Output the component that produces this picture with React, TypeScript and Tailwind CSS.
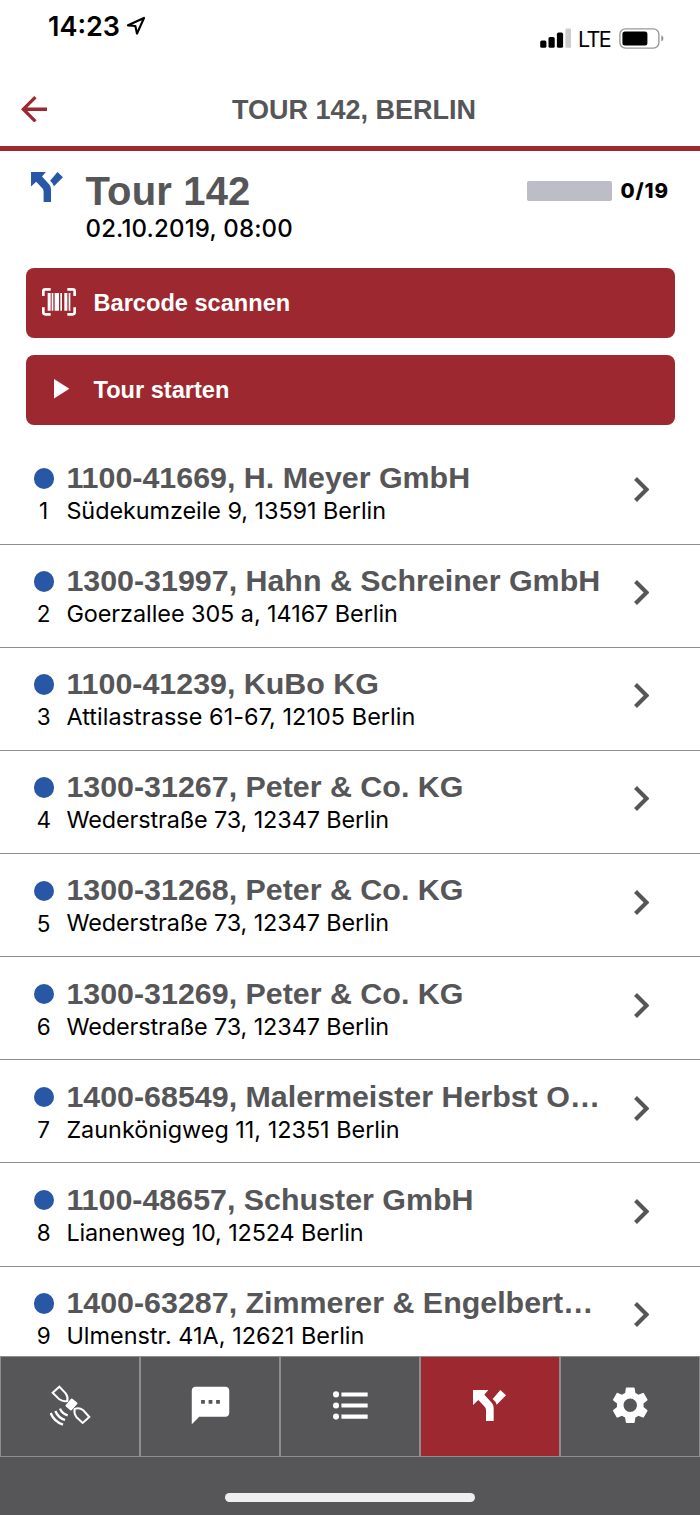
import { MdSettings, MdSms } from "react-icons/md";

type Stop = { title: string; address: string; tracking: string };

const stops: Stop[] = [
  { title: "1100-41669, H. Meyer GmbH", address: "Südekumzeile 9, 13591 Berlin", tracking: "tracking-[-0.05px]" },
  { title: "1300-31997, Hahn & Schreiner GmbH", address: "Goerzallee 305 a, 14167 Berlin", tracking: "tracking-[-0.05px]" },
  { title: "1100-41239, KuBo KG", address: "Attilastrasse 61-67, 12105 Berlin", tracking: "tracking-[0.07px]" },
  { title: "1300-31267, Peter & Co. KG", address: "Wederstraße 73, 12347 Berlin", tracking: "tracking-[-0.1px]" },
  { title: "1300-31268, Peter & Co. KG", address: "Wederstraße 73, 12347 Berlin", tracking: "tracking-[-0.1px]" },
  { title: "1300-31269, Peter & Co. KG", address: "Wederstraße 73, 12347 Berlin", tracking: "tracking-[-0.1px]" },
  { title: "1400-68549, Malermeister Herbst O…", address: "Zaunkönigweg 11, 12351 Berlin", tracking: "tracking-normal" },
  { title: "1100-48657, Schuster GmbH", address: "Lianenweg 10, 12524 Berlin", tracking: "tracking-[-0.13px]" },
  { title: "1400-63287, Zimmerer & Engelbert…", address: "Ulmenstr. 41A, 12621 Berlin", tracking: "tracking-[0.03px]" },
];

function SplitIcon({ className }: { className: string }) {
  return (
    <svg viewBox="39 152 99 93" className={className} fill="currentColor">
      <path d="M39 152H85L73 166L95 190Q101 196 101 205V245H78V212Q78 206 74 202L55 182L39 197Z" />
      <path d="M121 152L138 168L110 196Q107 186 98 179Z" />
    </svg>
  );
}

function SatelliteIcon() {
  return (
    <svg viewBox="149 140 123 123" className="h-[41px] w-[41px]" fill="none" stroke="white" strokeWidth="6">
      <path d="M157 163L177 145L196 165Q204 176 201 188Q187 191 177 183Z" />
      <path d="M223 212Q236 206 248 215L267 236L247 254L228 236Q220 225 223 212Z" />
      <path d="M214 184L228 195L212 213L199 202Z" fill="white" strokeLinejoin="round" strokeWidth="7" />
      <g strokeWidth="7">
        <path d="M151 224Q161 250 188 259" />
        <path d="M165 218Q173 238 194 245" />
        <path d="M179 211Q185 226 202 231" />
      </g>
    </svg>
  );
}

function ListIcon() {
  return (
    <svg viewBox="247 153 104 86" className="h-[29px] w-[35px]" fill="white">
      <circle cx="256" cy="163" r="9" />
      <circle cx="256" cy="196" r="9" />
      <circle cx="256" cy="229" r="9" />
      <path d="M272 157H350V169H272ZM272 190H350V202H272ZM272 223H350V235H272Z" />
    </svg>
  );
}

function BarcodeIcon() {
  return (
    <svg viewBox="127 114 102 84" className="h-7 w-[34px]" fill="none">
      <path
        d="M131 138V124Q131 118 137 118H153M203 118H219Q225 118 225 124V138M225 172V187Q225 193 219 193H203M153 193H137Q131 193 131 187V172"
        stroke="white"
        strokeWidth="8"
      />
      <path
        d="M144 129H153V182H144ZM156 129H161V182H156ZM165 129H178V182H165ZM182 129H187V182H182ZM194 129H203V182H194ZM207 129H212V182H207Z"
        fill="white"
      />
    </svg>
  );
}

function StatusBar() {
  return (
    <div className="flex h-[72px] items-start justify-between pl-12 pr-9">
      <div className="flex items-center pt-[11px]">
        <span className="text-[27px] font-semibold leading-8">14:23</span>
        <svg viewBox="378 48 60 58" className="mb-[2px] ml-[6px] h-[19.3px] w-5 shrink-0" fill="none" stroke="black" strokeWidth="6.5" strokeLinejoin="round">
          <path d="M384 76L432 54L411 101L406 78Z" />
        </svg>
      </div>
      <div className="flex items-center pt-[21px]">
        <svg viewBox="0 0 31.5 20" className="h-5 w-[31.5px]">
          <rect x="0.2" y="12.5" width="6.2" height="7.3" rx="1.6" />
          <rect x="8.5" y="9" width="6.2" height="10.8" rx="1.6" />
          <rect x="16.9" y="4.6" width="6.2" height="15.2" rx="1.6" />
          <rect x="25.4" y="0.6" width="6" height="19.2" rx="1.4" fill="#cccccc" />
        </svg>
        <span className="ml-[7px] mt-[2px] w-[41px] text-[21.5px] leading-8 tracking-[-1.6px]">LTE</span>
        <svg viewBox="0 0 45 21" className="h-[21px] w-[45px]">
          <rect x="0.9" y="0.9" width="39" height="19.2" rx="5.5" fill="none" stroke="#999999" strokeWidth="1.4" />
          <rect x="3.4" y="3.4" width="25" height="14.2" rx="2.5" />
          <path d="M42.4 7.2Q44.4 8.3 44.4 10.5T42.4 13.5Z" fill="#8c8c8c" />
        </svg>
      </div>
    </div>
  );
}

function ActionButton({ label, icon }: { label: string; icon: React.ReactNode }) {
  return (
    <button className="flex h-[70px] w-full items-center rounded-lg bg-[#9e2830] text-left text-white">
      <span className="-mt-[2px] flex w-[68px] justify-center pr-[2px]">{icon}</span>
      <span className="pt-[2px] font-['Liberation_Sans',sans-serif] text-[23.6px] font-bold">{label}</span>
    </button>
  );
}

function StopRow({ stop, index }: { stop: Stop; index: number }) {
  return (
    <li className="flex h-[103.15px] shrink-0 border-b-[1.5px] border-[#8e8e8e]">
      <div className="flex w-[66.4px] shrink-0 flex-col items-center pl-[21px] pt-[26.5px]">
        <span className="ml-px h-[20.5px] w-[20.5px] rounded-full bg-[#2857a6]" />
        <span className="mt-[8.5px] text-[22.5px] leading-7">{index}</span>
      </div>
      <div className="w-[549px] shrink-0 whitespace-nowrap pt-[17.3px]">
        <div className="font-['Liberation_Sans',sans-serif] text-[30.4px] font-bold leading-9 text-[#565658]">{stop.title}</div>
        <div className={"pt-[2px] text-[23.4px] leading-7 " + stop.tracking}>{stop.address}</div>
      </div>
      <svg viewBox="8.59 6 7.41 12" className="ml-[18.2px] mt-[35.5px] h-[25px] w-[15.5px]" fill="#565658">
        <path d="M10 6L8.59 7.41 13.17 12l-4.58 4.59L10 18l6-6z" />
      </svg>
    </li>
  );
}

function NavCell({ active, children }: { active?: boolean; children: React.ReactNode }) {
  return (
    <div className={"flex h-full flex-1 items-center justify-center border-x border-[#8e8e8e] pb-[2px] text-white " + (active ? "bg-[#9e2830]" : "bg-[#565658]")}>
      {children}
    </div>
  );
}

export default function App() {
  return (
    <div className="flex h-[1515px] w-[700px] flex-col overflow-hidden bg-white font-[Inter,sans-serif] text-black">
      <StatusBar />
      <header className="grid h-[79px] shrink-0 grid-cols-[48px_1fr_40px] items-center border-b-[5px] border-[#9e2830]">
        <svg viewBox="4 4 16 16" className="ml-[20.5px] h-[26.5px] w-[26.5px]" fill="#9e2830">
          <path d="M20 11H7.83l5.59-5.59L12 4l-8 8 8 8 1.41-1.41L7.83 13H20v-2z" />
        </svg>
        <h1 className="pt-[2px] text-center font-['Liberation_Sans',sans-serif] text-[27px] font-bold text-[#565658]">TOUR 142, BERLIN</h1>
      </header>
      <section className="flex h-[117px] shrink-0 items-start pl-[30.5px] pr-[31px]">
        <SplitIcon className="mt-[21px] h-[30px] w-8 text-[#2857a6]" />
        <div className="ml-[23px] flex-1 pt-[17px]">
          <h2 className="font-['Liberation_Sans',sans-serif] text-[40px] font-bold leading-[46px] tracking-[0.15px] text-[#565658]">Tour 142</h2>
          <p className="pt-px text-2xl font-medium leading-7 tracking-[0.17px]">02.10.2019, 08:00</p>
        </div>
        <div className="flex items-center pt-[28px]">
          <span className="h-5 w-[85px] rounded-[2px] bg-[#bcbdc6]" />
          <span className="ml-2 text-[20.5px] font-extrabold leading-6 tracking-[0.9px]">0/19</span>
        </div>
      </section>
      <section className="flex shrink-0 flex-col gap-[17px] px-[25.5px]">
        <ActionButton label="Barcode scannen" icon={<BarcodeIcon />} />
        <ActionButton
          label="Tour starten"
          icon={
            <svg viewBox="0 0 15.4 19.4" className="ml-[6px] h-[19.4px] w-[15.4px]" fill="white">
              <path d="M0 0L15.4 9.7L0 19.4Z" />
            </svg>
          }
        />
      </section>
      <ul className="mt-[16.5px] flex min-h-0 flex-1 flex-col overflow-hidden">
        {stops.map((stop, i) => (
          <StopRow key={stop.title} stop={stop} index={i + 1} />
        ))}
      </ul>
      <footer className="flex h-[159px] shrink-0 flex-col items-center bg-[#565658]">
        <nav className="flex h-[101px] w-full border-y border-t-[1.5px] border-[#8e8e8e]">
          <NavCell><SatelliteIcon /></NavCell>
          <NavCell><MdSms size={45} /></NavCell>
          <NavCell><ListIcon /></NavCell>
          <NavCell active><SplitIcon className="mr-px h-[31px] w-[33px]" /></NavCell>
          <NavCell><MdSettings size={44.5} /></NavCell>
        </nav>
        <div className="mt-9 h-[9px] w-[250px] rounded-full bg-[#eeeeee]" />
      </footer>
    </div>
  );
}
